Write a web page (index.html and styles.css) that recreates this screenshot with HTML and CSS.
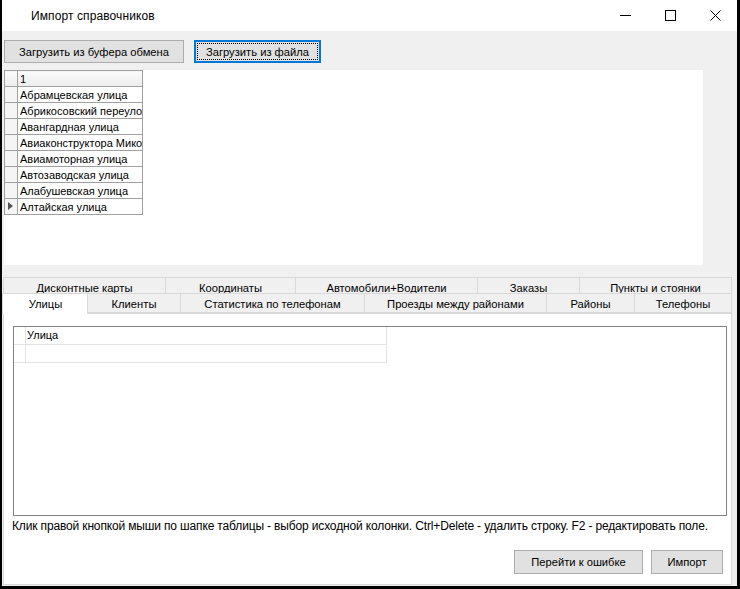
FILE: index.html
```html
<!DOCTYPE html>
<html lang="ru">
<head>
<meta charset="utf-8">
<title>Импорт справочников</title>
<link rel="stylesheet" href="styles.css">
</head>
<body>
<div class="window">
  <div class="titlebar">
    <span class="title">Импорт справочников</span>
    <div class="controls">
      <span class="ctl"><svg width="11" height="11" viewBox="0 0 11 11"><line x1="0" y1="5.5" x2="11" y2="5.5" stroke="#000" stroke-width="1"/></svg></span>
      <span class="ctl"><svg width="11" height="11" viewBox="0 0 11 11"><rect x="0.5" y="0.5" width="10" height="10" fill="none" stroke="#000" stroke-width="1"/></svg></span>
      <span class="ctl"><svg width="11" height="11" viewBox="0 0 11 11"><path d="M0.5 0.5 L10.5 10.5 M10.5 0.5 L0.5 10.5" stroke="#000" stroke-width="1" fill="none"/></svg></span>
    </div>
  </div>

  <div class="toolbar">
    <button class="btn btn-clip">Загрузить из буфера обмена</button>
    <button class="btn btn-file">Загрузить из файла</button>
  </div>

  <div class="grid-panel">
    <table class="dgv">
      <tr class="hdr"><td class="rh"></td><td class="cell">1</td></tr>
      <tr><td class="rh"></td><td class="cell">Абрамцевская улица</td></tr>
      <tr><td class="rh"></td><td class="cell">Абрикосовский переулок</td></tr>
      <tr><td class="rh"></td><td class="cell">Авангардная улица</td></tr>
      <tr><td class="rh"></td><td class="cell">Авиаконструктора Микояна улица</td></tr>
      <tr><td class="rh"></td><td class="cell">Авиамоторная улица</td></tr>
      <tr><td class="rh"></td><td class="cell">Автозаводская улица</td></tr>
      <tr><td class="rh"></td><td class="cell">Алабушевская улица</td></tr>
      <tr><td class="rh"><span class="cur"></span></td><td class="cell">Алтайская улица</td></tr>
    </table>
  </div>

  <div class="tabs">
    <div class="tabrow row1">
      <span class="tab w162">Дисконтные карты</span>
      <span class="tab w130">Координаты</span>
      <span class="tab w182">Автомобили+Водители</span>
      <span class="tab w102">Заказы</span>
      <span class="tab w153">Пункты и стоянки</span>
    </div>
    <div class="tabrow row2">
      <span class="tab sel w84">Улицы</span>
      <span class="tab w93">Клиенты</span>
      <span class="tab w184">Статистика по телефонам</span>
      <span class="tab w182">Проезды между районами</span>
      <span class="tab w88">Районы</span>
      <span class="tab w98">Телефоны</span>
    </div>
  </div>

  <div class="tabpage">
    <div class="grid2">
      <div class="g2row g2hdr"><span class="g2rh"></span><span class="g2cell">Улица</span></div>
      <div class="g2row"><span class="g2rh"></span><span class="g2cell"></span></div>
    </div>
    <p class="note">Клик правой кнопкой мыши по шапке таблицы - выбор исходной колонки. Ctrl+Delete - удалить строку. F2 - редактировать поле.</p>
    <div class="actions">
      <button class="btn btn-err">Перейти к ошибке</button>
      <button class="btn btn-imp">Импорт</button>
    </div>
  </div>
</div>
</body>
</html>
```
FILE: styles.css
```css
* { box-sizing: border-box; }
html, body { margin: 0; padding: 0; }
body {
  background: #000;
  width: 740px;
  height: 589px;
  overflow: hidden;
  font-family: "Liberation Sans", Arial, sans-serif;
  font-size: 12px;
  color: #000;
}
.window {
  margin-left: 2px;
  width: 735px;
  height: 586px;
  background: #f0f0f0;
  display: flex;
  flex-direction: column;
}
.titlebar {
  height: 31px;
  background: #fff;
  display: flex;
  align-items: center;
  padding-left: 29px;
  flex: none;
}
.title { font-size: 12px; letter-spacing: 0.1px; }
.controls { margin-left: auto; margin-right: -1px; display: flex; }
.ctl {
  width: 45px;
  height: 31px;
  display: flex;
  align-items: center;
  justify-content: center;
}

.toolbar {
  display: flex;
  gap: 10px;
  padding: 9px 0 0 2px;
  flex: none;
}
.btn {
  font-family: "Liberation Sans", Arial, sans-serif;
  font-size: 11.2px;
  color: #000;
  background: #e1e1e1;
  border: 1px solid #adadad;
  height: 23px;
  padding: 0;
  margin: 0;
  border-radius: 0;
}
.btn-clip { width: 180px; }
.btn-file {
  width: 127px;
  border: 2px solid #0078d7;
  outline: 1px dotted #000;
  outline-offset: -4px;
}

.grid-panel {
  margin: 7px 0 0 2px;
  width: 699px;
  height: 195px;
  background: #fff;
  flex: none;
}
.dgv {
  border-collapse: collapse;
  font-size: 11px;
  table-layout: fixed;
}
.dgv td {
  height: 16px;
  padding: 0;
  border: 1px solid #a0a0a0;
  white-space: nowrap;
  overflow: hidden;
  line-height: 14px;
}
.dgv .rh {
  width: 13px;
  background: #f5f5f5;
  position: relative;
}
.dgv .cell {
  width: 125px;
  max-width: 125px;
  padding-left: 2px;
  text-overflow: clip;
}
.dgv .hdr td {
  background: linear-gradient(#fbfbfb, #ececec);
}
.cur {
  position: absolute;
  left: 3px;
  top: 3px;
  width: 0;
  height: 0;
  border-left: 5px solid #555;
  border-top: 4px solid transparent;
  border-bottom: 4px solid transparent;
}

.tabs {
  margin: 12px 0 0 1px;
  width: 729px;
  flex: none;
  font-size: 11.2px;
}
.tabrow { display: flex; }
.tab {
  display: flex;
  align-items: center;
  justify-content: center;
  background: #f0f0f0;
  border: 1px solid #d9d9d9;
  border-right: none;
  white-space: nowrap;
}
.tab:last-child { border-right: 1px solid #d9d9d9; }
.row1 .tab { height: 17px; padding-top: 4px; }
.row2 .tab { height: 20px; margin-top: -1px; padding-top: 2px; }
.row2 .tab.sel {
  background: #fff;
  border-bottom: none;
  margin-left: -1px;
  padding-left: 1px;
  height: 21px;
  padding-top: 0;
  position: relative;
  z-index: 1;
}
.w162 { width: 162px; }
.w130 { width: 130px; }
.w182 { width: 182px; }
.w102 { width: 102px; }
.w153 { width: 153px; }
.w84 { width: 85px; }
.w93 { width: 93px; }
.w184 { width: 184px; }
.w88 { width: 88px; }
.w98 { width: 98px; }

.tabpage {
  margin-left: 1px;
  margin-top: -1px;
  width: 729px;
  flex: 1;
  margin-bottom: 1px;
  background: #fff;
  border: 1px solid #d9d9d9;
  padding: 12px 0 0 9px;
  display: flex;
  flex-direction: column;
}
.grid2 {
  width: 714px;
  height: 190px;
  border: 1px solid #828282;
  background: #fff;
  flex: none;
}
.g2row { display: flex; height: 18px; }
.g2rh {
  width: 12px;
  border-right: 1px solid #e3e3e3;
  border-bottom: 1px solid #e3e3e3;
}
.g2cell {
  width: 361px;
  border-right: 1px solid #e3e3e3;
  border-bottom: 1px solid #e3e3e3;
  font-size: 11px;
  line-height: 17px;
  padding-left: 1px;
}
.note {
  margin: 3px 0 0 -1px;
  line-height: 15px;
  white-space: nowrap;
  letter-spacing: -0.15px;
}
.actions {
  display: flex;
  justify-content: flex-end;
  gap: 8px;
  margin-top: 16px;
  padding-right: 8px;
}
.actions .btn { height: 24px; }
.btn-err { width: 129px; }
.btn-imp { width: 72px; }
```
